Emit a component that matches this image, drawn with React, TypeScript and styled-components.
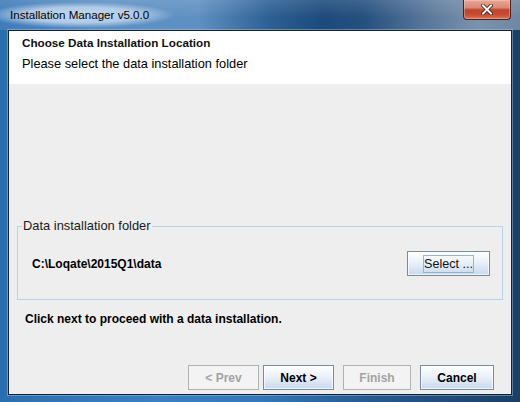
import React from 'react';
import styled, { createGlobalStyle } from 'styled-components';

const Global = createGlobalStyle`
  html, body { margin: 0; padding: 0; width: 520px; height: 402px; overflow: hidden; background: #fff; }
  * { box-sizing: border-box; }
`;

const Window = styled.div`
  width: 520px;
  height: 402px;
  display: flex;
  flex-direction: column;
  background: linear-gradient(90deg, #2b6eae 0%, #3a80c1 30%, #3377b8 50%, #25598f 72%, #1b3f66 100%);
  font-family: "Liberation Sans", Arial, sans-serif;
`;

const TitleBar = styled.div`
  height: 30px;
  flex: none;
  display: flex;
  align-items: flex-start;
  justify-content: space-between;
  background:
    radial-gradient(ellipse 95px 13px at 80px 15px, rgba(200, 219, 240, 0.95) 0%, rgba(200, 219, 240, 0.78) 60%, rgba(200, 219, 240, 0) 100%),
    linear-gradient(180deg, rgba(255, 255, 255, 0.12) 0%, rgba(255, 255, 255, 0) 60%),
    linear-gradient(90deg, #3f7bb8 0%, #5b8fc4 20%, #5f90c2 38%, #2c5f93 52%, #1c4a7c 62%, #24507e 70%, #59779a 82%, #7b92ad 92%, #6e87a3 100%);
`;

const TitleText = styled.div`
  margin: 8px 0 0 10px;
  font-size: 11.6px;
  line-height: 14px;
  color: #000;
`;

const CloseBtn = styled.div`
  width: 48px;
  height: 20px;
  margin-right: 9px;
  border: 1px solid #4b2119;
  border-top: none;
  border-radius: 0 0 4px 4px;
  background: linear-gradient(180deg, #e6a895 0%, #d98a74 40%, #c0452c 52%, #c44a30 75%, #dc7458 100%);
  box-shadow: inset 0 0 0 1px rgba(255, 220, 210, 0.35);
  display: flex;
  align-items: center;
  justify-content: center;
`;

const Client = styled.div`
  flex: 1;
  margin: 0 8px 7px 8px;
  border: 1px solid #142235;
  box-shadow: 0 0 0 1px rgba(170, 200, 230, 0.45);
  background: #eeeeee;
  display: flex;
  flex-direction: column;
`;

const Header = styled.div`
  height: 53px;
  flex: none;
  background: #ffffff;
  padding: 5px 13px 0;
`;

const HeaderTitle = styled.div`
  font-size: 11.7px;
  font-weight: bold;
  line-height: 14px;
  color: #111;
`;

const HeaderSub = styled.div`
  margin-top: 7px;
  font-size: 12.8px;
  line-height: 14px;
  color: #000;
`;

const Body = styled.div`
  flex: 1;
  display: flex;
  flex-direction: column;
  padding: 0 8px 4px;
`;

const Group = styled.fieldset`
  margin: 135px 0 0;
  padding: 18px 12px 23px 14px;
  border: 1px solid #b9d1ea;
  min-width: 0;
  display: flex;
  align-items: center;
  justify-content: space-between;
`;

const Legend = styled.legend`
  margin-left: -10px;
  padding: 0 1px;
  font-size: 12.9px;
  line-height: 14px;
  color: #1a1a1a;
`;

const PathText = styled.div`
  font-size: 12px;
  font-weight: bold;
  line-height: 14px;
  color: #000;
`;

const Button = styled.div<{ $w: number; $disabled?: boolean }>`
  width: ${(p) => p.$w}px;
  height: 25px;
  flex: none;
  display: flex;
  align-items: center;
  justify-content: center;
  font-size: 12px;
  font-weight: bold;
  color: ${(p) => (p.$disabled ? '#a3a3a3' : '#000')};
  border: 1px solid ${(p) => (p.$disabled ? '#adb2b7' : '#7b8a9b')};
  background: ${(p) =>
    p.$disabled
      ? '#f3f3f3'
      : 'linear-gradient(180deg, #fdfeff 0%, #eef3fa 40%, #dbe6f4 70%, #c7d8ee 100%)'};
  box-shadow: ${(p) => (p.$disabled ? 'none' : 'inset 0 0 0 1px rgba(255,255,255,0.7)')};
`;

const FocusRing = styled.span`
  width: 51px;
  height: 18px;
  display: flex;
  align-items: center;
  justify-content: center;
  border: 1px solid #9db3cb;
  font-size: 12.6px;
  font-weight: normal;
  color: #111;
`;

const Notice = styled.div`
  margin: 12px 0 0 8px;
  font-size: 12px;
  font-weight: bold;
  line-height: 14px;
  color: #000;
`;

const ButtonRow = styled.div`
  margin-top: auto;
  display: flex;
  justify-content: flex-end;
  padding-right: 9px;
`;

const Gap = styled.div<{ $w: number }>`
  width: ${(p) => p.$w}px;
  flex: none;
`;

const CloseIcon = () => (
  <svg width="12" height="11" viewBox="0 0 12 11">
    <path d="M2 1.5 L10 9.5 M10 1.5 L2 9.5" stroke="#3c1811" strokeWidth="3.6" strokeLinecap="square" />
    <path d="M2 1.5 L10 9.5 M10 1.5 L2 9.5" stroke="#ffffff" strokeWidth="2" strokeLinecap="square" />
  </svg>
);

export default function App() {
  return (
    <>
      <Global />
      <Window>
        <TitleBar>
          <TitleText>Installation Manager v5.0.0</TitleText>
          <CloseBtn>
            <CloseIcon />
          </CloseBtn>
        </TitleBar>
        <Client>
          <Header>
            <HeaderTitle>Choose Data Installation Location</HeaderTitle>
            <HeaderSub>Please select the data installation folder</HeaderSub>
          </Header>
          <Body>
            <Group>
              <Legend>Data installation folder</Legend>
              <PathText>C:\Loqate\2015Q1\data</PathText>
              <Button $w={83}>
                <FocusRing>Select ...</FocusRing>
              </Button>
            </Group>
            <Notice>Click next to proceed with a data installation.</Notice>
            <ButtonRow>
              <Button $w={71} $disabled>&lt; Prev</Button>
              <Gap $w={4} />
              <Button $w={71}>Next &gt;</Button>
              <Gap $w={9} />
              <Button $w={68} $disabled>Finish</Button>
              <Gap $w={9} />
              <Button $w={74}>Cancel</Button>
            </ButtonRow>
          </Body>
        </Client>
      </Window>
    </>
  );
}
